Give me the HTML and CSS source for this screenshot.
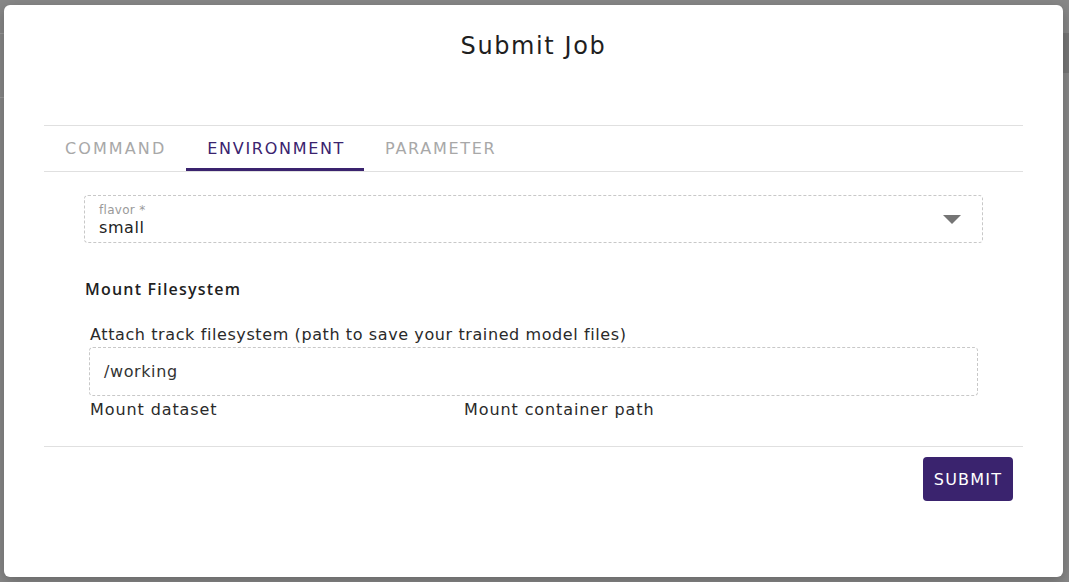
FILE: index.html
```html
<!DOCTYPE html>
<html lang="en">
<head>
<meta charset="utf-8">
<title>Submit Job</title>
<link rel="stylesheet" href="styles.css">
</head>
<body>
<div class="backdrop">
  <div class="bg-line"></div>
  <div class="bg-line second"></div>
  <div class="bg-band"></div>
</div>
<div class="modal">
  <h1 class="title">Submit Job</h1>
  <div class="tabs">
    <div class="tab first">COMMAND</div>
    <div class="tab active">ENVIRONMENT</div>
    <div class="tab">PARAMETER</div>
  </div>
  <div class="content">
    <div class="select">
      <div class="select-text">
        <span class="select-label">flavor *</span>
        <span class="select-value">small</span>
      </div>
      <svg class="caret" width="18" height="9" viewBox="0 0 18 9"><path d="M0 0h18L9 9z" fill="#757575"/></svg>
    </div>
    <h2 class="section">Mount Filesystem</h2>
    <div class="field-label">Attach track filesystem (path to save your trained model files)</div>
    <div class="input">/working</div>
    <div class="mount-row">
      <span class="mount-col">Mount dataset</span>
      <span class="mount-col">Mount container path</span>
    </div>
  </div>
  <div class="footer">
    <button class="submit">SUBMIT</button>
  </div>
</div>
</body>
</html>
```
FILE: styles.css
```css
html, body {
  margin: 0;
  padding: 0;
  width: 1069px;
  height: 582px;
  overflow: hidden;
  background: #888888;
  font-family: "DejaVu Sans", "Open Sans", sans-serif;
}

.backdrop {
  position: absolute;
  inset: 0;
}

.bg-line {
  position: absolute;
  left: 0;
  top: 33px;
  width: 30px;
  height: 1px;
  background: #9a9a9a;
}
.bg-line.second {
  top: 97px;
}

.bg-band {
  position: absolute;
  right: 0;
  top: 33px;
  width: 10px;
  height: 40px;
  background: #777777;
}

.modal {
  position: absolute;
  left: 4px;
  top: 5px;
  width: 1059px;
  height: 572px;
  background: #ffffff;
  border-radius: 6px;
  box-shadow: 0 4px 14px rgba(0, 0, 0, 0.25);
  display: flex;
  flex-direction: column;
}

.title {
  margin: 26px 0 0;
  height: 30px;
  line-height: 30px;
  font-size: 24px;
  font-weight: 400;
  letter-spacing: 1.6px;
  text-align: center;
  color: #1f1f1f;
}

.tabs {
  margin: 64px 40px 0;
  border-top: 1px solid #e0e0e0;
  border-bottom: 1px solid #e0e0e0;
  display: flex;
  height: 45px;
}

.tab {
  padding: 0 19px 0 21px;
  font-size: 16px;
  letter-spacing: 1.7px;
  line-height: 45px;
  color: #a8a8a8;
  box-sizing: border-box;
}

.tab.first {
  letter-spacing: 2.1px;
  padding-right: 20px;
}

.tab.active {
  color: #3a236e;
  border-bottom: 3px solid #3a236e;
}

.content {
  margin: 0 80px;
  padding-top: 23px;
  display: flex;
  flex-direction: column;
  letter-spacing: 0.6px;
}

.select {
  height: 48px;
  border: 1px dashed #c8c8c8;
  border-radius: 4px;
  box-sizing: border-box;
  display: flex;
  align-items: center;
  justify-content: space-between;
  padding: 2px 21px 0 14px;
}

.select-text {
  display: flex;
  flex-direction: column;
}

.select-label {
  font-size: 12px;
  line-height: 15px;
  color: #9a9a9a;
  letter-spacing: 0.3px;
}

.select-value {
  font-size: 16px;
  line-height: 20px;
  color: #222222;
}

.caret {
  display: block;
  margin-top: -2px;
}

.section {
  margin: 36px 0 0 1px;
  font-family: "Open Sans", "DejaVu Sans", sans-serif;
  font-size: 16px;
  font-weight: 600;
  letter-spacing: 1.2px;
  line-height: 20px;
  color: #1f1f1f;
}

.field-label {
  margin: 26px 0 0 6px;
  font-size: 16px;
  line-height: 20px;
  color: #2a2a2a;
}

.input {
  margin: 2px 5px 0 5px;
  height: 49px;
  border: 1px dashed #c8c8c8;
  border-radius: 4px;
  box-sizing: border-box;
  padding: 0 14px;
  font-size: 16px;
  line-height: 48px;
  color: #333333;
}

.mount-row {
  margin: 4px 0 0 6px;
  display: flex;
  font-size: 16px;
  line-height: 20px;
  color: #2a2a2a;
  letter-spacing: 0.9px;
}

.mount-col {
  width: 374px;
}

.footer {
  margin: 26px 40px 0;
  border-top: 1px solid #e0e0e0;
  display: flex;
  justify-content: flex-end;
  padding: 10px 10px 0 0;
}

.submit {
  width: 90px;
  height: 44px;
  border: none;
  border-radius: 4px;
  background: #3a236e;
  color: #ffffff;
  font-family: inherit;
  font-size: 16px;
  letter-spacing: 1.2px;
  cursor: pointer;
}
```
